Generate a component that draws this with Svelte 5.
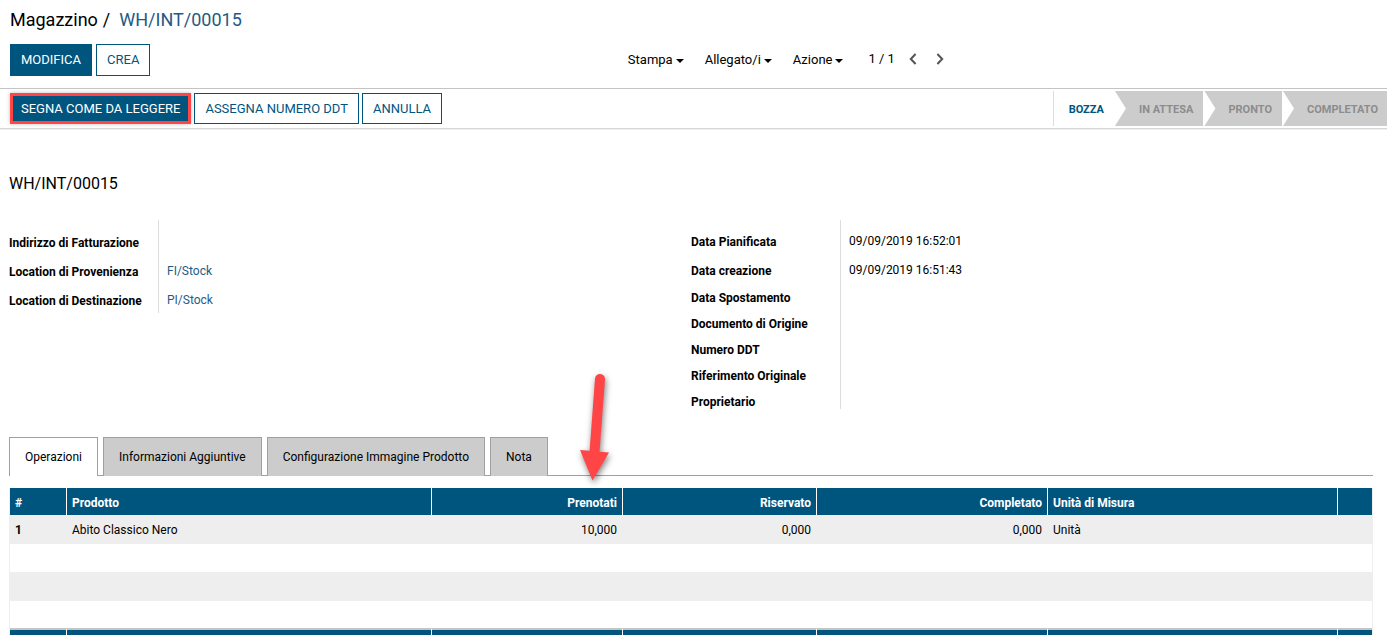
<script>
  const menus = ['Stampa', 'Allegato/i', 'Azione'];
  const stages = ['BOZZA', 'IN ATTESA', 'PRONTO', 'COMPLETATO'];
  const left = [
    { label: 'Indirizzo di Fatturazione' },
    { label: 'Location di Provenienza', link: 'FI/Stock' },
    { label: 'Location di Destinazione', link: 'PI/Stock' }
  ];
  const right = [
    { label: 'Data Pianificata', value: '09/09/2019 16:52:01' },
    { label: 'Data creazione', value: '09/09/2019 16:51:43' },
    { label: 'Data Spostamento' },
    { label: 'Documento di Origine' },
    { label: 'Numero DDT' },
    { label: 'Riferimento Originale' },
    { label: 'Proprietario' }
  ];
  const tabs = ['Operazioni', 'Informazioni Aggiuntive', 'Configurazione Immagine Prodotto', 'Nota'];
  let active = $state(0);
</script>

{#snippet group(rows, extra)}
  <dl class="group {extra}">
    {#each rows as row}
      <div class="field" class:filled={row.value || row.link}>
        <dt>{row.label}</dt>
        <dd>
          {#if row.link}<a href="#location">{row.link}</a>{:else}{row.value ?? ''}{/if}
        </dd>
      </div>
    {/each}
  </dl>
{/snippet}

<header class="panel">
  <nav class="crumbs">
    <a class="root" href="#magazzino">Magazzino</a>
    <span>/</span>
    <span class="current">WH/INT/00015</span>
  </nav>
  <div class="toolbar">
    <div class="actions">
      <button class="btn primary">MODIFICA</button>
      <button class="btn">CREA</button>
    </div>
    <div class="menus">
      {#each menus as menu}
        <button class="menu">{menu}<i class="caret"></i></button>
      {/each}
      <div class="pager">
        <span>1 / 1</span>
        <button aria-label="Precedente">
          <svg width="8" height="12" viewBox="0 0 8 12"><path d="M6.600 1 1.800 6l4.800 5" /></svg>
        </button>
        <button aria-label="Successivo">
          <svg width="8" height="12" viewBox="0 0 8 12"><path d="M1.400 1l4.800 5-4.800 5" /></svg>
        </button>
      </div>
    </div>
  </div>
</header>

<section class="status">
  <div class="workflow">
    <button class="btn primary marked">SEGNA COME DA LEGGERE</button>
    <button class="btn">ASSEGNA NUMERO DDT</button>
    <button class="btn">ANNULLA</button>
  </div>
  <ol class="stages">
    {#each stages as stage, i}
      <li class:current={i === 0}>{stage}</li>
    {/each}
  </ol>
</section>

<main>
  <h1>WH/INT/00015</h1>
  <div class="groups">
    {@render group(left, 'short')}
    {@render group(right, '')}
  </div>

  <div class="tabs" role="tablist">
    {#each tabs as tab, i}
      <button role="tab" aria-selected={active === i} class:active={active === i} onclick={() => (active = i)}>{tab}</button>
    {/each}
  </div>

  <table>
    <colgroup>
      <col class="c-index" /><col /><col class="c-reserved" /><col class="c-assigned" />
      <col class="c-done" /><col class="c-unit" /><col class="c-tools" />
    </colgroup>
    <thead>
      <tr>
        <th>#</th>
        <th>Prodotto</th>
        <th class="num pointed">
          Prenotati
          <svg class="arrow" width="44" height="120" viewBox="0 0 44 120" aria-hidden="true">
            <path d="M23 10.800a5 5 0 0 1 10 .4L27.500 83.800 37 84.500 20.500 112.500 8 82l9.600.7z" />
          </svg>
        </th>
        <th class="num">Riservato</th>
        <th class="num">Completato</th>
        <th>Unità di Misura</th>
        <th></th>
      </tr>
    </thead>
    <tbody>
      <tr>
        <td><b>1</b></td>
        <td>Abito Classico Nero</td>
        <td class="num">10,000</td>
        <td class="num">0,000</td>
        <td class="num">0,000</td>
        <td>Unità</td>
        <td></td>
      </tr>
      {#each [1, 2, 3] as n (n)}
        <tr><td></td><td></td><td></td><td></td><td></td><td></td><td></td></tr>
      {/each}
    </tbody>
    <tfoot>
      <tr><td></td><td></td><td></td><td></td><td></td><td></td><td></td></tr>
    </tfoot>
  </table>
</main>

<style>
  :global(body) {
    background: #fff;
    color: #000;
    font: 12px/14px Roboto, "Liberation Sans", sans-serif;
  }
  button {
    font: inherit;
    color: inherit;
    cursor: pointer;
  }
  a {
    color: #1f5a86;
    text-decoration: none;
  }
  .panel {
    padding: 8px 4px 12px 10px;
    border-bottom: 1px solid #c4c4c4;
  }
  .crumbs {
    display: flex;
    gap: 5px;
    font-size: 18px;
    line-height: 24px;
  }
  .crumbs .root {
    color: #000;
  }
  .crumbs .current {
    margin-left: 4px;
    color: #1f5a86;
  }
  .toolbar {
    display: grid;
    grid-template-columns: 45% auto;
    align-items: center;
    margin-top: 12px;
  }
  .actions {
    display: flex;
    gap: 4px;
  }
  .btn {
    height: 32px;
    padding: 0 10px;
    border: 1px solid #00557f;
    background: #fff;
    color: #00557f;
    font-size: 13px;
    line-height: 16px;
    white-space: nowrap;
  }
  .btn.primary {
    background: #00557f;
    color: #fff;
  }
  .menus {
    display: flex;
    align-items: center;
    font-size: 13px;
  }
  .menu {
    display: flex;
    align-items: center;
    gap: 3px;
    margin-right: 21px;
    padding: 0;
    border: 0;
    background: none;
  }
  .caret {
    margin-top: 2px;
    border: 4px solid transparent;
    border-top-color: #000;
    border-bottom: 0;
  }
  .pager {
    display: flex;
    align-items: center;
    margin-left: 4px;
    padding-bottom: 2px;
  }
  .pager button {
    display: flex;
    margin-left: 15px;
    padding: 0 2px;
    border: 0;
    background: none;
  }
  .pager span + button {
    margin-left: 12px;
  }
  .pager path {
    fill: none;
    stroke: #555;
    stroke-width: 2;
  }
  .status {
    display: flex;
    justify-content: space-between;
    align-items: center;
    height: 39px;
    padding-left: 10px;
    overflow: hidden;
    border-bottom: 1px solid #d6d6d6;
    box-shadow: 0 1px 0 #efefef;
  }
  .workflow {
    display: flex;
    gap: 3px;
  }
  .workflow .btn {
    height: 31px;
  }
  .btn.marked {
    padding: 0 8px;
    border: 3px solid #ff4545;
    box-shadow: 0 0 4px rgb(0 0 0 / 25%);
  }
  .stages {
    display: flex;
    gap: 1px;
    margin: 0 -1px 0 0;
    padding: 0;
    list-style: none;
    font-size: 11px;
    font-weight: 700;
    line-height: 33px;
    white-space: nowrap;
  }
  .stages li {
    padding: 2px 10px 0 24px;
    background: #ccc;
    color: #8c8c8c;
    clip-path: polygon(0 0, 100% 0, 100% 100%, 0 100%, 11px 50%);
  }
  .stages li.current {
    padding-left: 15px;
    border-left: 1px solid #ddd;
    background: #fff;
    color: #00557f;
    clip-path: none;
  }
  main {
    padding: 45px 14px 0 9px;
  }
  h1 {
    margin: 0;
    font-size: 16px;
    font-weight: 400;
    line-height: 20px;
  }
  .groups {
    display: grid;
    grid-template-columns: 1fr 1fr;
    align-items: start;
    margin-top: 26px;
  }
  .group {
    margin: 0;
    background: linear-gradient(#ddd, #ddd) 149px 0 / 1px 100% no-repeat;
  }
  .group.short {
    padding: 4px 0 5px;
  }
  .field {
    display: grid;
    grid-template-columns: 158px 1fr;
    align-items: end;
    height: 26px;
  }
  .filled + .field {
    height: 27px;
  }
  .field.filled {
    height: 29px;
  }
  dt {
    font-weight: 700;
  }
  dd {
    margin: 0;
    padding-bottom: 1px;
  }
  .tabs {
    display: flex;
    gap: 5px;
    margin-top: 28px;
    box-shadow: inset 0 -1px #a0a0a0;
  }
  .tabs button {
    height: 39px;
    padding: 0 15px;
    border: 1px solid #a0a0a0;
    border-bottom: 0;
    background: #ccc;
  }
  .tabs .active {
    background: #fff;
  }
  table {
    width: 100%;
    margin-top: 12px;
    border-collapse: separate;
    border-spacing: 0;
    table-layout: fixed;
    border: solid #eee;
    border-width: 0 1px;
  }
  .c-index { width: 57px; }
  .c-reserved { width: 191px; }
  .c-assigned { width: 194px; }
  .c-done { width: 231px; }
  .c-unit { width: 290px; }
  .c-tools { width: 34px; }
  th,
  td {
    padding: 0 5px;
    text-align: left;
  }
  th {
    height: 27px;
    padding-top: 2px;
    box-sizing: border-box;
    background: #00557f;
    color: #fff;
  }
  th:not(:last-child),
  tfoot td:not(:last-child) {
    border-right: 1px solid #fff;
  }
  tbody td {
    height: 28px;
  }
  tbody tr:nth-child(odd) td {
    height: 29px;
    background: #eee;
  }
  tbody tr:last-child td {
    height: 27px;
  }
  .num {
    text-align: right;
  }
  tbody .num {
    padding-right: 6px;
  }
  tfoot td {
    height: 5px;
    border-top: 2px solid #c4c4c4;
    background: #00557f;
  }
  .pointed {
    position: relative;
  }
  .arrow {
    position: absolute;
    right: 6px;
    bottom: 100%;
    overflow: visible;
    filter: drop-shadow(1px 3px 3px rgb(0 0 0 / 50%));
  }
  .arrow path {
    fill: #ff4545;
  }
</style>
